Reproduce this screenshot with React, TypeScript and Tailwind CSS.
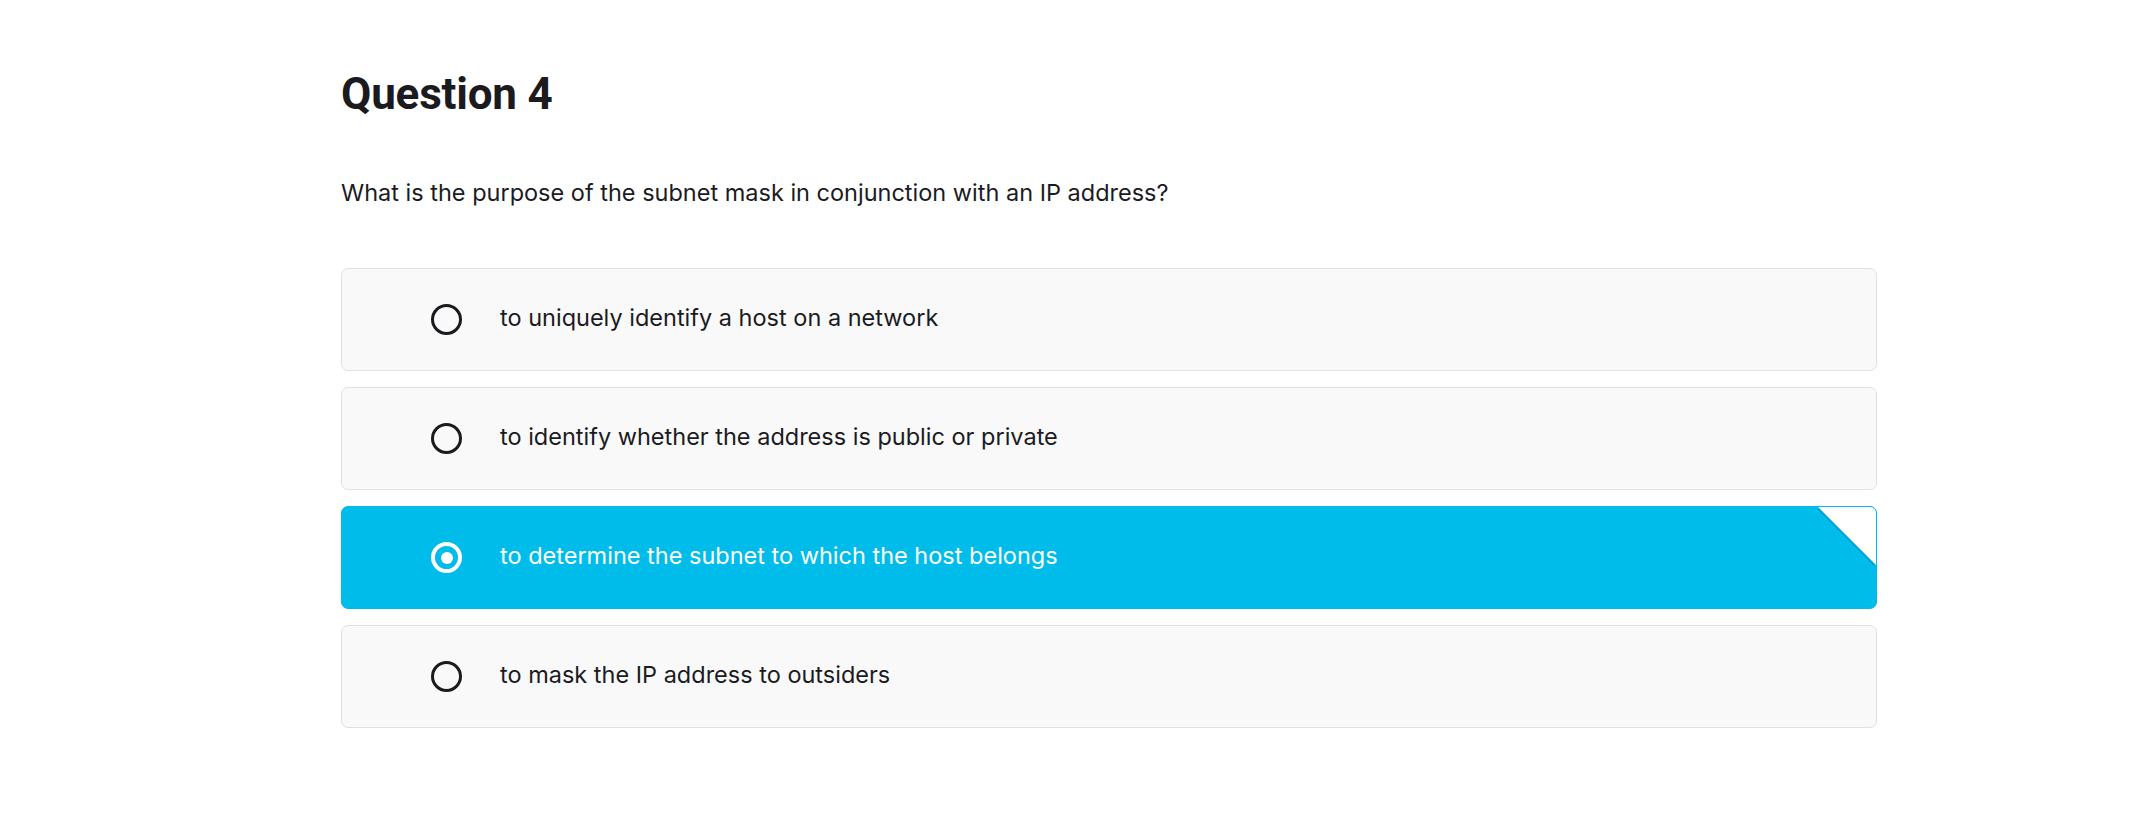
import { useState } from "react";

const options = [
  "to uniquely identify a host on a network",
  "to identify whether the address is public or private",
  "to determine the subnet to which the host belongs",
  "to mask the IP address to outsiders",
];

function Radio({ checked }: { checked: boolean }) {
  if (checked) {
    return (
      <span className="flex h-[31px] w-[31px] shrink-0 items-center justify-center rounded-full border-[4px] border-white">
        <span className="h-[12px] w-[12px] rounded-full bg-white" />
      </span>
    );
  }
  return <span className="h-[31px] w-[31px] shrink-0 rounded-full border-[3.5px] border-[#1b1b1f]" />;
}

export default function App() {
  const [selected, setSelected] = useState(2);

  return (
    <div className="min-h-[825px] bg-white font-['Inter',sans-serif] text-[#1b1b1f]">
      <div className="ml-[341px] w-[1536px] pt-[72px]">
        <h1 className="font-['Roboto',sans-serif] text-[44px] font-bold leading-none tracking-[-0.2px]">
          Question 4
        </h1>
        <p className="mt-[62px] text-[23.5px] leading-[30px]">
          What is the purpose of the subnet mask in conjunction with an IP address?
        </p>

        <div className="mt-[60px] flex flex-col gap-[16px]">
          {options.map((opt, i) => {
            const isSel = i === selected;
            return (
              <button
                key={i}
                onClick={() => setSelected(i)}
                className={
                  isSel
                    ? "relative flex h-[103px] items-center overflow-hidden rounded-[7px] border border-[#00bceb] bg-[#00bceb] pl-[89px] text-left text-white"
                    : "relative flex h-[103px] items-center overflow-hidden rounded-[7px] border border-[#dfe1e6] bg-[#f9f9f9] pl-[89px] text-left"
                }
              >
                <Radio checked={isSel} />
                <span className="mb-[4px] ml-[38px] text-[23.5px] leading-[30px]">{opt}</span>
                {isSel && (
                  <svg className="absolute right-0 top-0" width="58" height="58" viewBox="0 0 58 58">
                    <polygon points="-3,0 58,0 58,61" fill="#0088ad" opacity="0.45" />
                    <polygon points="0,0 58,0 58,58" fill="#ffffff" />
                  </svg>
                )}
              </button>
            );
          })}
        </div>
      </div>
    </div>
  );
}
